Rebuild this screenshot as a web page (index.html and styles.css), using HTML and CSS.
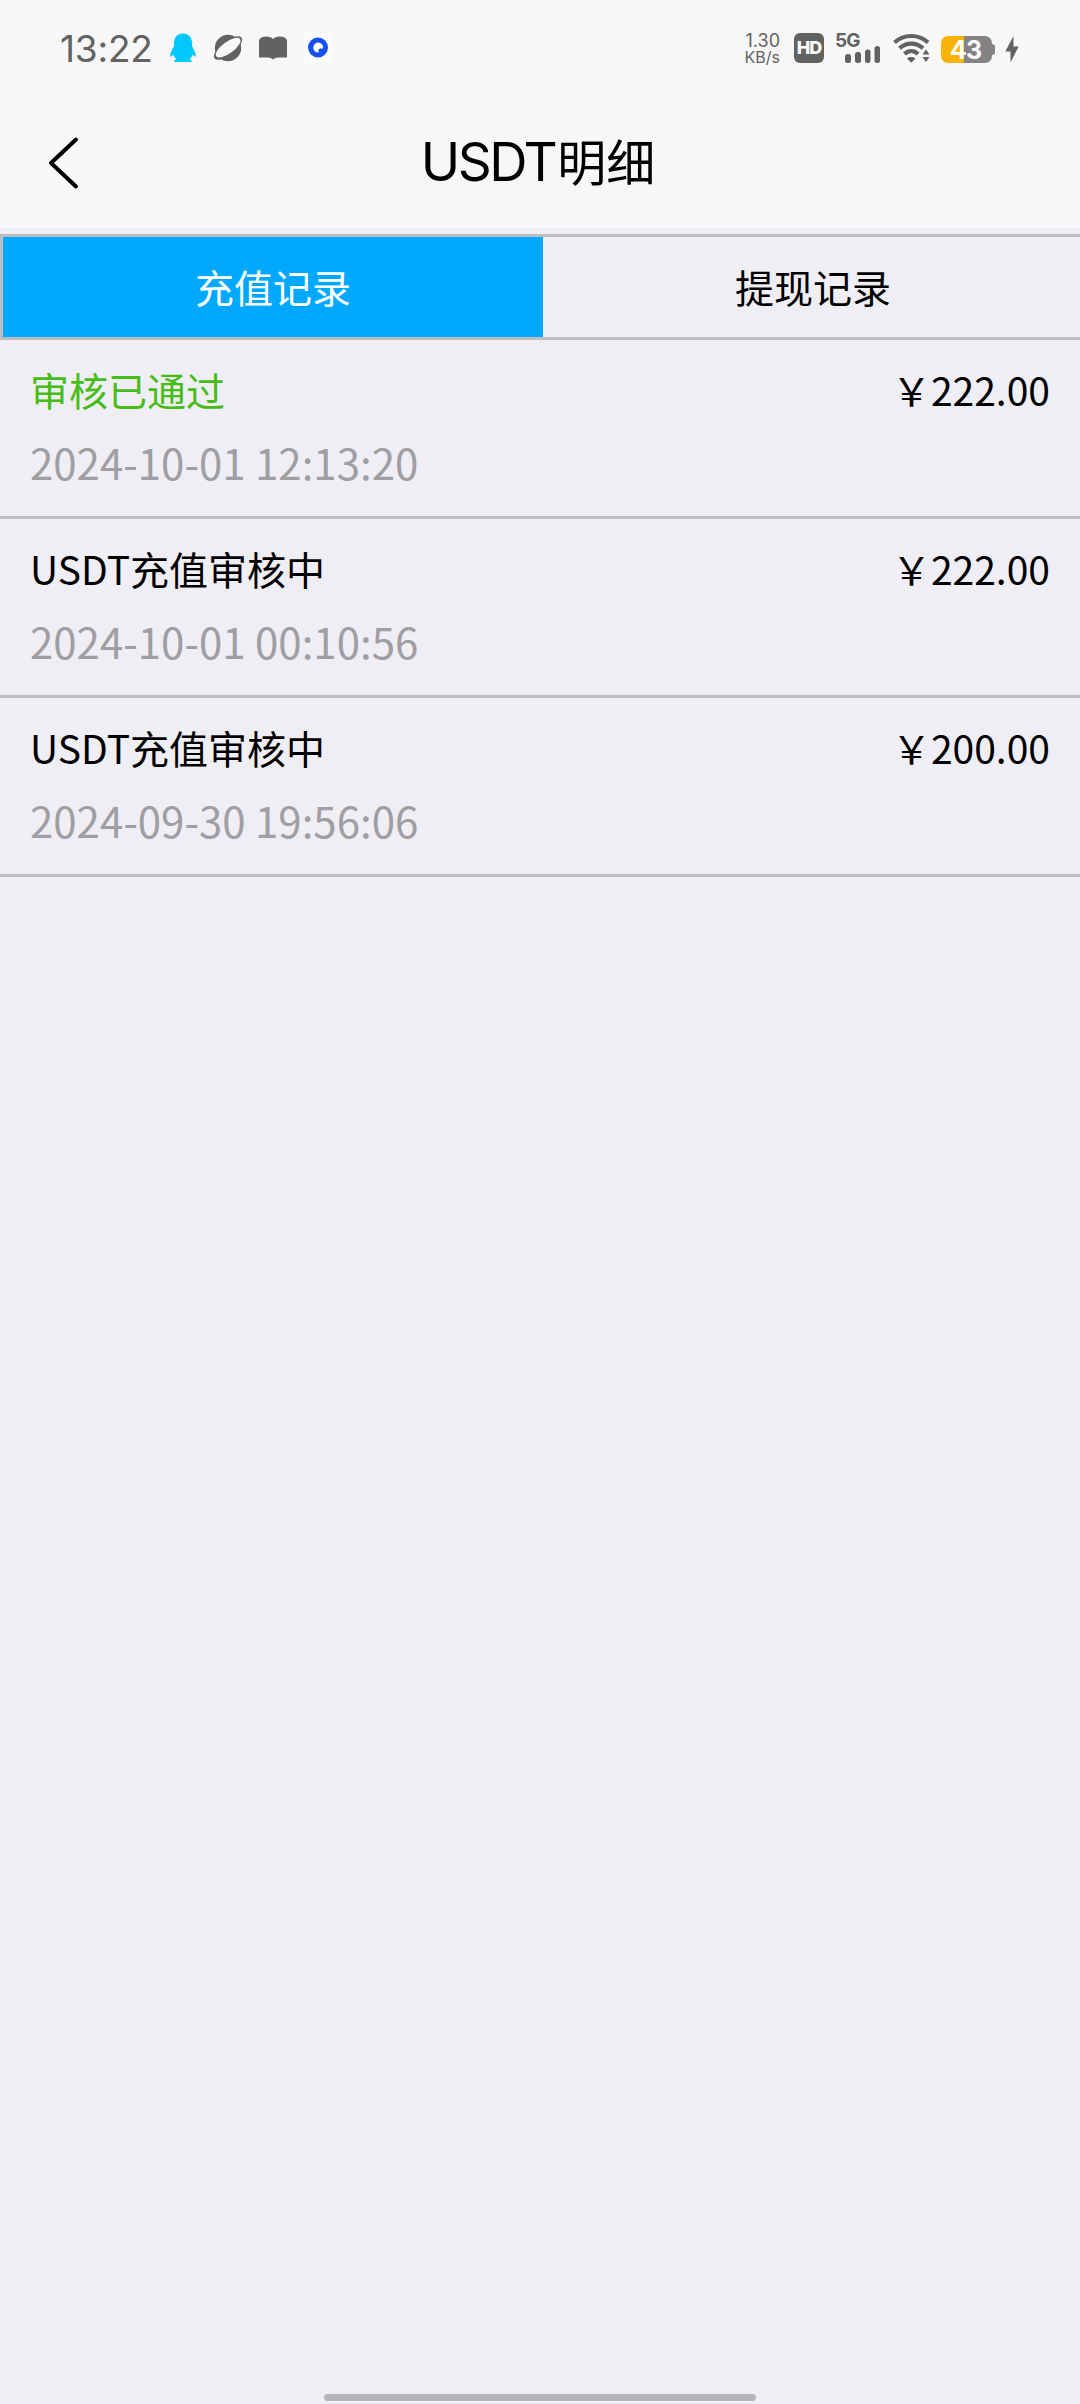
FILE: index.html
```html
<!DOCTYPE html>
<html lang="zh-CN">
<head>
  <meta charset="UTF-8">
  <meta name="viewport" content="width=device-width, initial-scale=1.0">
  <title>USDT明细</title>
  <link rel="stylesheet" href="styles.css">
</head>
<body>
  <!-- Status bar -->
  <div class="status-bar">
    <div class="status-left">
      <span class="time">13:22</span>
      <svg class="icon-qq" width="26" height="30" viewBox="0 0 26 30">
        <path fill="#00c8fd" d="M13 0.500C7.300 0.500 4 4.500 4 10V13C2.500 16 0 20 0.300 23C0.600 24.400 2 23 3.500 21.500C4 23.500 5 25 6.500 26.300C4.500 27 4 28 4.500 29H21.500C22 28 21.500 27 19.500 26.300C21 25 22 23.500 22.500 21.500C24 23 25.400 24.400 25.700 23C26 20 23.500 16 22 13V10C22 4.500 18.700 0.500 13 0.500Z"/>
      </svg>
      <svg class="icon-planet" width="30" height="28" viewBox="0 0 30 28">
        <circle cx="15" cy="14" r="13.200" fill="#626262"/>
        <ellipse cx="15" cy="14" rx="17" ry="7" transform="rotate(-38 15 14)" fill="#626262"/>
        <ellipse cx="15.300" cy="13.800" rx="14.700" ry="5.800" transform="rotate(-36 15 14)" fill="#f7f7f7"/>
      </svg>
      <svg class="icon-book" width="28" height="24" viewBox="0 0 28 24">
        <path fill="#626262" d="M0 4C2 -0.500 11.500 -0.500 14 3C16.500 -0.500 26 -0.500 28 4V21.500H19C17 21.500 15.500 22.300 14 23.500C12.500 22.300 11 21.500 9 21.500H0Z"/>
      </svg>
      <svg class="icon-app" width="30" height="30" viewBox="0 0 30 30">
        <rect width="30" height="30" fill="#fbfbfb"/>
        <circle cx="15" cy="14.500" r="10" fill="#164ff0"/>
        <path fill="#fff" d="M15 9.500A5 5 0 1 0 15.500 19.500V17A2 2 0 0 1 17.500 15.500H20A5 5 0 0 0 15 9.500Z"/>
      </svg>
    </div>
    <div class="status-right">
      <div class="net-speed">
        <span class="speed">1.30</span>
        <span class="unit">KB/s</span>
      </div>
      <div class="hd">HD</div>
      <div class="signal">
        <span class="network">5G</span>
        <svg class="bars" width="36" height="17" viewBox="0 0 36 17" fill="#626262">
          <rect x="0" y="8" width="6" height="9" rx="2.500"/>
          <rect x="10" y="6" width="6" height="11" rx="2.500"/>
          <rect x="20" y="3.500" width="5.500" height="13.500" rx="2.500"/>
          <rect x="29.500" y="0" width="5.500" height="17" rx="2.500"/>
        </svg>
      </div>
      <svg class="icon-wifi" width="38" height="30" viewBox="0 0 38 30">
        <g fill="none" stroke="#626262" stroke-width="4.200">
          <path d="M1.500 9.500C11 0.800 25.500 0.800 35 9.500"/>
          <path d="M6.500 15.300C13.500 9 23 9 30 15.300"/>
          <path d="M11.500 21C15.500 17.200 21 17.200 25 21"/>
        </g>
        <path fill="#626262" d="M14 25.500C16.500 23.600 20 23.600 22.500 25.500L18.250 29.800Z"/>
        <path fill="#626262" d="M29.500 21.500L33 16.500L36.500 21.500ZM29.500 24L33 29L36.500 24Z"/>
      </svg>
      <div class="battery">
        <span class="level">43</span>
      </div>
      <svg class="icon-bolt" width="14" height="27" viewBox="0 0 14 27">
        <path fill="#626262" d="M8.500 0L0.300 15.500H5.500V26.500L13.700 10.500H8.500Z"/>
      </svg>
    </div>
  </div>

  <!-- Nav bar -->
  <div class="nav-bar">
    <svg class="back" width="32" height="54" viewBox="0 0 32 54">
      <path d="M28 3.500L3 27L28 50.500" fill="none" stroke="#000" stroke-width="4" stroke-linecap="round" stroke-linejoin="round"/>
    </svg>
    <div class="title">USDT<span class="title-cn">明细</span></div>
  </div>

  <!-- Tabs -->
  <div class="tabs">
    <div class="tab active">充值记录</div>
    <div class="tab">提现记录</div>
  </div>

  <!-- Record list -->
  <div class="record-list">
    <div class="record">
      <div class="record-top">
        <span class="status passed">审核已通过</span>
        <span class="amount">￥222.00</span>
      </div>
      <div class="date">2024-10-01 12:13:20</div>
    </div>
    <div class="record">
      <div class="record-top">
        <span class="status">USDT充值审核中</span>
        <span class="amount">￥222.00</span>
      </div>
      <div class="date">2024-10-01 00:10:56</div>
    </div>
    <div class="record">
      <div class="record-top">
        <span class="status">USDT充值审核中</span>
        <span class="amount">￥200.00</span>
      </div>
      <div class="date">2024-09-30 19:56:06</div>
    </div>
  </div>

  <div class="home-bar"></div>
</body>
</html>
```
FILE: styles.css
```css
* {
  box-sizing: border-box;
}

body {
  display: flex;
  flex-direction: column;
  margin: 0;
  height: 2404px;
  overflow: hidden;
  background-color: #efeef4;
  color: #000;
  font-family: "Noto Sans CJK SC", sans-serif;
}

svg {
  display: block;
  flex-shrink: 0;
}

/* Status bar */
.status-bar {
  display: flex;
  justify-content: space-between;
  height: 96px;
  padding: 0 61px 0 60px;
  background-color: #f7f7f7;
  color: #626262;
  font-family: Inter, sans-serif;
}

.status-left,
.status-right {
  display: flex;
  align-items: center;
}

.time {
  width: 110px;
  font-size: 37px;
  letter-spacing: -0.2px;
}

.icon-planet {
  margin-left: 17px;
}

.icon-book {
  margin-left: 16px;
}

.icon-app {
  margin-left: 16px;
}

.net-speed {
  display: flex;
  flex-direction: column;
  align-items: flex-end;
  margin-right: 14px;
}

.speed {
  font-size: 18px;
  line-height: 17px;
}

.unit {
  font-size: 16px;
  line-height: 16px;
}

.hd {
  width: 30px;
  height: 30px;
  margin-right: 11px;
  border-radius: 6px;
  background-color: #626262;
  color: #fff;
  font-size: 18px;
  font-weight: 800;
  line-height: 30px;
  letter-spacing: -1px;
  text-align: center;
}

.signal {
  display: flex;
  flex-direction: column;
  width: 46px;
  height: 30px;
  margin-right: 12px;
}

.network {
  height: 13px;
  font-size: 19px;
  font-weight: 700;
  line-height: 15px;
  letter-spacing: -1px;
}

.bars {
  margin-left: 10px;
}

.icon-wifi {
  margin-right: 10px;
}

.battery {
  position: relative;
  width: 51px;
  height: 27px;
  margin: 3px 13px 0 0;
  border-radius: 7px;
  background: linear-gradient(to right, #f9b208 23px, #838285 23px);
  color: #fff;
  text-align: center;
}

/* battery tip */
.battery::after {
  content: "";
  position: absolute;
  top: 8px;
  right: -3px;
  width: 3px;
  height: 11px;
  border-radius: 0 3px 3px 0;
  background-color: #838285;
}

.level {
  display: block;
  margin-left: -2px;
  font-size: 25px;
  font-weight: 700;
  line-height: 28px;
  letter-spacing: -1px;
}

.icon-bolt {
  margin-top: 2px;
}

/* Nav bar */
.nav-bar {
  display: grid;
  grid-template-columns: 80px 1fr 80px;
  align-items: center;
  height: 132px;
  background-color: #f7f7f7;
}

.back {
  margin: 2px 0 0 48px;
}

.title {
  display: flex;
  align-items: baseline;
  justify-content: center;
  margin: -2px 4px 0 0;
  font-family: Inter, sans-serif;
  font-size: 53px;
  font-weight: 400;
  line-height: 64px;
  letter-spacing: -2.4px;
}

.title-cn {
  margin-left: 2px;
  font-family: "Noto Sans CJK SC", sans-serif;
  font-size: 49px;
  font-weight: 400;
  letter-spacing: 0;
}

/* Tabs */
.tabs {
  display: flex;
  width: 1083px;
  height: 106px;
  margin-top: 6px;
  border: 3px solid #bdbcc2;
  border-right: none;
}

.tab {
  flex: 1;
  font-size: 39px;
  line-height: 98px;
  text-align: center;
}

.tab.active {
  background-color: #00a8ff;
  color: #fff;
}

/* Records */
.record-list {
  flex: 1;
}

.record {
  height: 179px;
  padding: 20px 30px 0;
  border-bottom: 3px solid #bdbcc2;
}

.record-top {
  display: flex;
  justify-content: space-between;
  font-size: 39px;
  line-height: 58px;
}

.status.passed {
  color: #46bd17;
}

.date {
  margin-top: 13px;
  color: #9f9ea3;
  font-size: 42px;
  line-height: 62px;
}

.home-bar {
  align-self: center;
  width: 432px;
  height: 7px;
  margin-bottom: 3px;
  border-radius: 4px;
  background-color: #b5b4b9;
}
```
